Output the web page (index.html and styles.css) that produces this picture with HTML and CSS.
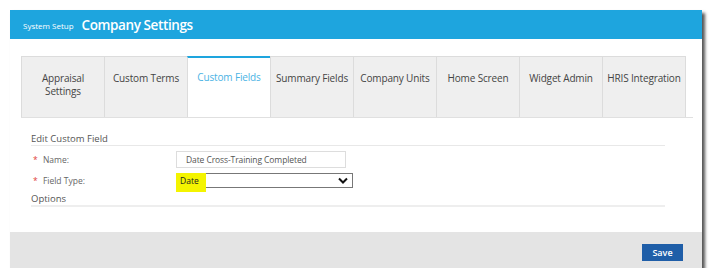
FILE: index.html
```html
<!DOCTYPE html>
<html lang="en">
<head>
    <meta charset="UTF-8">
    <title>Company Settings</title>
    <link rel="stylesheet" href="styles.css">
</head>
<body>
    <div class="frame">
        <div class="header">
            <span class="crumb">System Setup</span>
            <span class="title">Company Settings</span>
        </div>

        <div class="content">
            <!-- Settings tabs -->
            <div class="tabs">
                <div class="tab">Appraisal<br>Settings</div>
                <div class="tab">Custom Terms</div>
                <div class="tab active">Custom Fields</div>
                <div class="tab">Summary Fields</div>
                <div class="tab">Company Units</div>
                <div class="tab">Home Screen</div>
                <div class="tab">Widget Admin</div>
                <div class="tab">HRIS Integration</div>
            </div>

            <!-- Edit form -->
            <div class="section">
                <div class="section-title">Edit Custom Field</div>
                <div class="row">
                    <label><span class="req">*</span> Name:</label>
                    <div class="input">Date Cross-Training Completed</div>
                </div>
                <div class="row">
                    <label><span class="req">*</span> Field Type:</label>
                    <div class="select">
                        <span class="mark">Date</span>
                        <svg class="chev" width="10" height="7" viewBox="0 0 10 7">
                            <path d="M1 1.5 L5 5.5 L9 1.5" fill="none" stroke="#111" stroke-width="2"/>
                        </svg>
                    </div>
                </div>
                <div class="section-title options">Options</div>
            </div>
        </div>

        <div class="footer">
            <button class="save">Save</button>
        </div>
    </div>
</body>
</html>
```

FILE: styles.css
```css
body {
    margin: 0;
    background: #fff;
    font-family: "Open Sans", Arial, sans-serif;
    color: #444;
}

.frame {
    margin: 10px 0 0 10px;
    width: 692px;
    height: 258px;
    display: flex;
    flex-direction: column;
    box-shadow: 3px 3px 3px #555;
    background: #fff;
}

.header {
    height: 29px;
    background: #1ea5de;
    display: flex;
    align-items: center;
    padding-left: 13px;
    color: #fff;
}

.crumb {
    font-size: 8px;
    margin-right: 8px;
    margin-top: 2px;
}

.title {
    font-size: 13.5px;
    font-weight: 600;
    letter-spacing: -0.4px;
}

.content {
    flex: 1;
    padding: 17px 0 0 11px;
}

.tabs {
    display: flex;
    width: 672px;
    border-bottom: 1px solid #e0e0e0;
}

.tab {
    width: 84px;
    height: 61px;
    box-sizing: border-box;
    padding-top: 15px;
    background: #efefef;
    border: 1px solid #dcdcdc;
    border-bottom: none;
    margin-right: -1px;
    font-size: 10px;
    line-height: 12.5px;
    letter-spacing: -0.15px;
    text-align: center;
    color: #444;
    white-space: nowrap;
}

.tab:last-child {
    margin-right: 0;
}

.tab.active {
    background: #fff;
    border-top: 2px solid #1ea5de;
    color: #4bb3e4;
    padding-top: 13px;
}

.section {
    padding: 15px 37px 0 10px;
}

.section-title {
    font-size: 9.5px;
    line-height: 12px;
    color: #555;
    border-bottom: 1px solid #e8e8e8;
}

.section-title.options {
    margin-top: 4px;
    border-bottom: 2px solid #eee;
}

.row {
    display: flex;
    align-items: center;
    margin-top: 5px;
    height: 17px;
}

.row + .row {
    margin-top: 4px;
}

label {
    width: 143px;
    font-size: 8.5px;
    color: #666;
    padding-left: 2px;
}

.req {
    color: #e0403b;
    margin-right: 3px;
}

.input {
    width: 170px;
    height: 17px;
    box-sizing: border-box;
    border: 1px solid #ddd;
    font-size: 8.5px;
    letter-spacing: -0.1px;
    color: #555;
    padding: 2px 0 0 9px;
}

.select {
    position: relative;
    width: 177px;
    height: 15px;
    box-sizing: border-box;
    border: 1px solid #777;
    display: flex;
    align-items: center;
    justify-content: space-between;
    padding-right: 4px;
}

.mark {
    position: absolute;
    left: -1px;
    top: -1px;
    width: 30px;
    height: 19px;
    background: #f4f400;
    font-size: 8.5px;
    color: #222;
    padding: 2px 0 0 4px;
    box-sizing: border-box;
}

.chev {
    margin-left: auto;
}

.footer {
    height: 36px;
    background: #e4e4e4;
    display: flex;
    justify-content: flex-end;
    align-items: flex-start;
    padding: 12px 19px 0 0;
    box-sizing: border-box;
}

.save {
    width: 41px;
    height: 17px;
    background: #1f5ea8;
    border: none;
    color: #fff;
    font-family: "Open Sans", Arial, sans-serif;
    font-size: 9px;
    font-weight: 600;
    padding: 0;
}
```
